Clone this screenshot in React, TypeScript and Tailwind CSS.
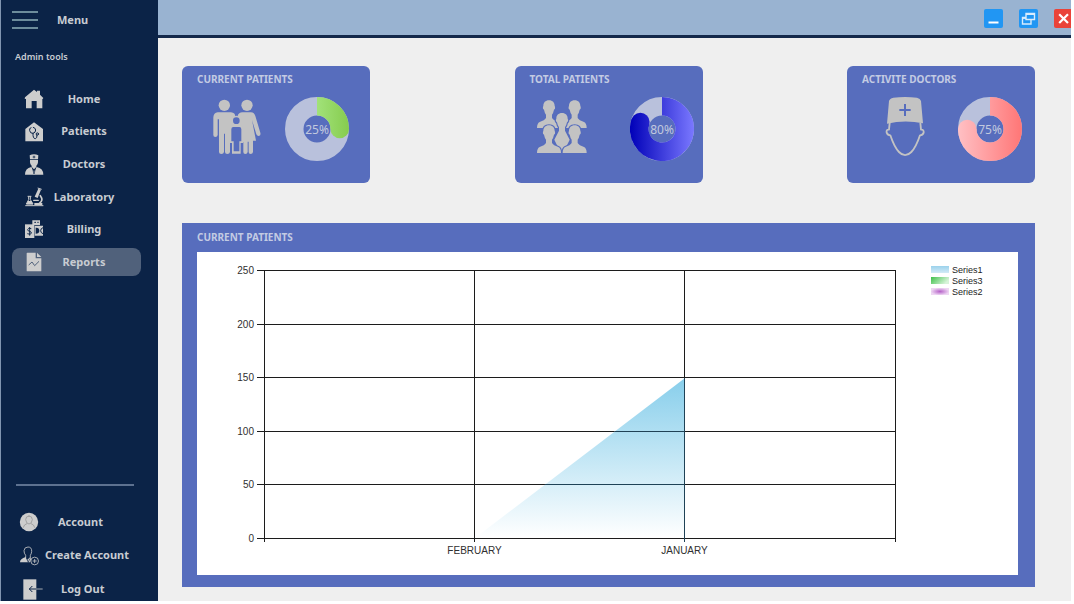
import type { ReactNode } from "react";

const ICON = "#cdcdcd";
const NAVY = "#0b2347";
const CARD = "#576dbd";

function Home() {
  return (
    <svg viewBox="72 267 60 60" className="h-5 w-5" fill={ICON} aria-hidden="true">
      <path d="M102 269 L111 276 V272 H120 V284 L130 294 L128 297 H127 V325 H110 V303 H95 V325 H78 V297 L74 296 L75 292 Z" />
    </svg>
  );
}

function Patients() {
  return (
    <svg viewBox="72 363 60 60" className="h-5 w-5" aria-hidden="true">
      <path d="M102 364 L129 384 V421 H76 V384 Z" fill={ICON} />
      <g fill="none" stroke={NAVY} strokeWidth="3" strokeLinecap="round">
        <path d="M93 380 Q87 381 89 389 Q91 398 99 397 Q107 395 107 387 Q106 380 100 379" />
        <path d="M99 397 Q98 413 106 413 Q112 412 111 402" />
        <circle cx="112" cy="399" r="3.5" />
      </g>
    </svg>
  );
}

function Doctors() {
  return (
    <svg viewBox="72 26 60 63" className="h-[21px] w-5" aria-hidden="true">
      <path d="M89 30 Q102 24 115 30 L114 42 H90 Z" fill={ICON} />
      <path d="M102 31 V39 M98 35 H106" stroke={NAVY} strokeWidth="2.4" />
      <path d="M90 44 H114 Q115 57 109 61 V66 L102 72 L95 66 V61 Q89 57 90 44 Z" fill={ICON} />
      <path d="M94 65 L102 79 L110 65 Q130 69 130 88 H75 Q75 69 94 65 Z" fill={ICON} />
      <path d="M97 67 L102 86 L107 67" stroke={NAVY} strokeWidth="2" fill="none" />
    </svg>
  );
}

function Laboratory() {
  return (
    <svg viewBox="72 124 60 60" className="h-5 w-5" aria-hidden="true">
      <g fill="none" stroke={ICON} strokeWidth="3" strokeLinecap="round" strokeLinejoin="round">
        <path d="M84 152 H93 M86 153 V162 L79 175 H99 L91 162 V153" />
        <path d="M77 180 H129" />
        <path d="M121 150 Q132 164 118 173" strokeWidth="5" />
        <path d="M101 164 H115" strokeWidth="4" />
      </g>
      <path d="M84 166 H94 L99 176 H79 Z" fill={ICON} />
      <path d="M115 129 L123 132 L113 157 L104 153 Z" fill={ICON} />
      <path d="M113 127 L125 131" stroke={ICON} strokeWidth="3" />
      <path d="M103 172 H127 V178 H103 Z" fill={ICON} />
    </svg>
  );
}

function Billing() {
  return (
    <svg viewBox="72 223 60 60" className="h-5 w-5" aria-hidden="true">
      <path d="M97 227 H120 V241 H97 Z M104 243 H129 V273 H104 Z" fill={ICON} />
      <path d="M103 233 H108 M112 233 H116" stroke={NAVY} strokeWidth="3" />
      <path d="M107 249 Q118 248 118 258 Q118 267 107 267 Z" fill={NAVY} />
      <path d="M129 249 Q122 251 122 258 Q122 265 129 267" stroke={NAVY} strokeWidth="3" fill="none" />
      <rect x="75" y="239" width="28" height="41" fill={ICON} />
      <path
        d="M94 252 Q84 248 83 255 Q83 259 89 260 Q95 261 94 266 Q92 271 82 267 M89 247 V273"
        fill="none"
        stroke={NAVY}
        strokeWidth="2.8"
      />
    </svg>
  );
}

function Reports() {
  return (
    <svg viewBox="72 319 60 60" className="h-5 w-5" aria-hidden="true">
      <path d="M82 321 H107 V338 H124 V375 Q124 377 122 377 H82 Q80 377 80 375 V323 Q80 321 82 321 Z" fill={ICON} />
      <path d="M111 321 L124 334 H111 Z" fill={ICON} />
      <path d="M86 358 L96 349 L104 360 L117 347" fill="none" stroke="#50617b" strokeWidth="3" />
    </svg>
  );
}

function Account() {
  return (
    <svg viewBox="58 126 60 60" className="h-5 w-5" aria-hidden="true">
      <circle cx="88" cy="156" r="27.5" fill={ICON} />
      <g fill="none" stroke="#9a9a9a" strokeWidth="2.6" strokeLinecap="round">
        <path d="M88 138 Q98 138 98 149 Q96 162 88 162 Q80 162 78 149 Q78 138 88 138 Z" />
        <path d="M71 172 Q73 163 81 161 M95 161 Q103 163 105 172" />
      </g>
    </svg>
  );
}

function CreateAccount() {
  return (
    <svg viewBox="58 226 60 60" className="h-5 w-5" aria-hidden="true">
      <g fill="none" stroke={ICON} strokeWidth="2.4">
        <path d="M85 229 Q97 229 96 243 Q95 250 92 254 V261 M78 261 V254 Q73 248 73 240 Q74 229 85 229" />
        <circle cx="105" cy="271" r="11.5" />
        <path d="M105 265 V277 M99 271 H111" />
      </g>
      <path d="M78 259 L83 267 L92 259 L94 266 L91 275 H61 Q61 264 78 259 Z" fill={ICON} />
      <path d="M80 262 L86 275 L90 264" fill="none" stroke={NAVY} strokeWidth="2" />
    </svg>
  );
}

function LogOut() {
  return (
    <svg viewBox="70 325 60 63" className="h-[21px] w-5" aria-hidden="true">
      <rect x="71" y="326" width="39" height="61" fill={ICON} />
      <path d="M98 346 L89 355 L98 364 M89 355 H110" fill="none" stroke={NAVY} strokeWidth="3" />
      <path d="M110 355 H129" stroke={ICON} strokeWidth="2.4" />
    </svg>
  );
}

function Family() {
  return (
    <svg viewBox="114 126 144 192" className="h-16 w-12" fill="#c3c3c3" aria-hidden="true">
      <circle cx="148" cy="151" r="17" />
      <circle cx="216" cy="151" r="17" />
      <path d="M128 172 H168 Q181 173 181 186 V262 H165 V291 Q164 297 157 297 Q150 297 150 291 V236 H147 V291 Q146 297 139 297 Q132 297 132 291 V193 H128 V240 Q127 246 121 246 Q115 246 115 240 V187 Q116 173 128 172 Z" />
      <path d="M202 172 H228 Q238 173 241 183 L256 233 Q258 241 252 243 Q247 244 244 238 L231 195 L243 257 H234 V291 Q233 297 227 297 Q221 297 221 291 V260 H218 V291 Q217 297 211 297 Q205 297 205 291 V262 H188 V182 Q191 173 202 172 Z" />
      <path d="M184 182 Q199 183 197 199 Q197 205 193 209 Q204 211 204 222 V264 H197 V296 H171 V264 H164 V222 Q164 211 175 209 Q170 204 170 197 Q172 183 184 182 Z" />
      <circle cx="184" cy="197" r="10" fill={CARD} />
      <path d="M175 216 H193 Q199 216 199 223 V259 H193 V289 H176 V259 H169 V223 Q169 216 175 216 Z" fill={CARD} />
    </svg>
  );
}

const person =
  "M0 0 C11 0 17 7 17 17 Q19 19 18 25 L15 28 Q13 38 9 43 V53 Q13 60 28 65 Q36 69 36 83 H-36 Q-36 69 -28 65 Q-13 60 -9 53 V43 Q-13 38 -15 28 L-18 25 Q-19 19 -17 17 C-17 7 -11 0 0 0 Z";

function Group() {
  return (
    <svg viewBox="95 126 150 192" className="h-16 w-[50px]" fill="#c3c3c3" aria-hidden="true">
      <path d={person} transform="translate(131 136)" />
      <path d={person} transform="translate(208 136)" />
      <g stroke={CARD} strokeWidth="7" paintOrder="stroke">
        <path
          transform="translate(170 174)"
          d="M0 0 C11 0 17 7 17 17 Q19 19 18 25 L15 28 Q13 38 9 43 V53 L23 80 L4 119 H-4 L-23 80 L-9 53 V43 Q-13 38 -15 28 L-18 25 Q-19 19 -17 17 C-17 7 -11 0 0 0 Z"
        />
        <path d={person} transform="translate(131 211)" />
        <path d={person} transform="translate(208 211)" />
      </g>
      <path d="M90 294 H250 V310 H90 Z" fill={CARD} />
    </svg>
  );
}

function Surgeon() {
  return (
    <svg viewBox="135 126 120 192" className="h-16 w-10" aria-hidden="true">
      <path d="M147 138 Q149 130 160 128 Q195 124 231 128 Q241 130 243 138 L249 205 Q195 194 141 206 Z" fill="#c3c3c3" />
      <path d="M195 147 V183 M178 165 H212" stroke={CARD} strokeWidth="6" />
      <path
        d="M149 204 L147 224 Q138 223 140 233 Q143 241 151 241 Q163 277 177 291 Q195 310 214 291 Q228 277 240 241 Q248 241 251 233 Q252 223 243 224 L241 203"
        fill="none"
        stroke="#c3c3c3"
        strokeWidth="5.5"
        strokeLinejoin="round"
      />
    </svg>
  );
}

type Gauge = { id: string; value: number; from: string; to: string };

function Donut({ id, value, from, to }: Gauge) {
  const r = 22.75;
  const angle = (value / 100) * 2 * Math.PI;
  const x = 32 + r * Math.sin(angle);
  const y = 32 - r * Math.cos(angle);
  const large = value > 50 ? 1 : 0;
  return (
    <svg viewBox="0 0 64 64" className="h-16 w-16" role="img" aria-label={`${value}%`}>
      <defs>
        <linearGradient id={id} gradientUnits="userSpaceOnUse" x1={value < 50 ? 30 : 0} y1="0" x2="64" y2="0">
          <stop offset="0" stopColor={from} />
          <stop offset="1" stopColor={to} />
        </linearGradient>
      </defs>
      <circle cx="32" cy="32" r={r} fill="none" stroke="#b9c1dc" strokeWidth="18.5" />
      <path d={`M32 ${32 - r} A${r} ${r} 0 ${large} 1 ${x} ${y}`} fill="none" stroke={`url(#${id})`} strokeWidth="18.5" />
      <circle cx={x} cy={y} r="9.25" fill={`url(#${id})`} />
      <text x="32" y="37" textAnchor="middle" fontSize="12" fill="#c2c9de" className="font-['Noto_Sans',sans-serif]">
        {value}%
      </text>
    </svg>
  );
}

function StatCard({ title, spacing, icon, gauge }: { title: string; spacing: string; icon: ReactNode; gauge: Gauge }) {
  return (
    <section className="h-[117px] w-[188px] rounded-md bg-[#576dbd] pt-[5px]">
      <h2 className="pl-[15px] text-[10px] leading-4 font-bold text-[#c3cbe3]">{title}</h2>
      <div className={`mt-2.5 flex ${spacing}`}>
        {icon}
        <Donut {...gauge} />
      </div>
    </section>
  );
}

const yTicks = [
  [250, 18.5],
  [200, 72.5],
  [150, 125.5],
  [100, 179.5],
  [50, 232.5],
  [0, 286.5],
];

const xTicks: [number, string][] = [
  [67.5, ""],
  [277.5, "FEBRUARY"],
  [487.5, "JANUARY"],
  [698.5, ""],
];

const legend = [
  ["Series1", "url(#legend-blue)"],
  ["Series3", "url(#legend-green)"],
  ["Series2", "url(#legend-purple)"],
];

function Chart() {
  return (
    <svg
      viewBox="0 0 821 323"
      className="h-auto w-full bg-white font-['Liberation_Sans',Arial,sans-serif]"
      role="img"
      aria-label="Current patients by month"
    >
      <defs>
        <linearGradient id="area" x1="0" y1="0" x2="0" y2="1">
          <stop offset="0" stopColor="#87ceeb" />
          <stop offset="1" stopColor="#ffffff" />
        </linearGradient>
        <linearGradient id="legend-blue" x1="0" y1="0" x2="0" y2="1">
          <stop offset="0" stopColor="#9bd2ec" />
          <stop offset="1" stopColor="#d3eaf6" />
        </linearGradient>
        <linearGradient id="legend-green" x1="0" y1="0" x2="1" y2="0.4">
          <stop offset="0" stopColor="#3fc04a" />
          <stop offset="1" stopColor="#d8f4da" />
        </linearGradient>
        <radialGradient id="legend-purple">
          <stop offset="0" stopColor="#b560c8" />
          <stop offset="1" stopColor="#eed6f3" />
        </radialGradient>
      </defs>
      <g stroke="#1c1c1c" strokeWidth="1">
        {yTicks.map(([value, y]) => (
          <line key={value} x1="60" x2="698" y1={y} y2={y} />
        ))}
        {xTicks.map(([x]) => (
          <line key={x} x1={x} x2={x} y1="18" y2="290" />
        ))}
      </g>
      <path d="M278 286 L488 126 V286 Z" fill="url(#area)" />
      <path d="M418 179.5 H488 M348 232.5 H488 M487.5 126 V290" stroke="#1f4256" />
      <g fontSize="10" fill="#303030">
        {yTicks.map(([value, y]) => (
          <text key={value} x="57" y={y + 3.5} textAnchor="end">
            {value}
          </text>
        ))}
        {xTicks.map(([x, label]) => (
          <text key={x} x={x} y="302" textAnchor="middle">
            {label}
          </text>
        ))}
      </g>
      <g fontSize="9" fill="#1c1c1c">
        {legend.map(([name, fill], i) => (
          <g key={name}>
            <rect x="734" y={14 + i * 11} width="18" height="7" fill={fill} />
            <text x="755" y={21 + i * 11}>
              {name}
            </text>
          </g>
        ))}
      </g>
    </svg>
  );
}

const nav: { label: string; icon: ReactNode; active?: boolean }[] = [
  { label: "Home", icon: <Home /> },
  { label: "Patients", icon: <Patients /> },
  { label: "Doctors", icon: <Doctors /> },
  { label: "Laboratory", icon: <Laboratory /> },
  { label: "Billing", icon: <Billing /> },
  { label: "Reports", icon: <Reports />, active: true },
];

const accountLinks = [
  { label: "Account", icon: <Account />, spacing: "pl-[18px] gap-[19px]" },
  { label: "Create Account", icon: <CreateAccount />, spacing: "pl-[18px] gap-1.5" },
  { label: "Log Out", icon: <LogOut />, spacing: "pl-[22px] gap-[18px]" },
];

function Sidebar() {
  return (
    <aside className="flex w-[158px] shrink-0 flex-col border-l border-[#8195b0] bg-[#0b2347] text-[11px] font-bold text-[#c8ccd2]">
      <div className="flex h-10 items-center gap-[19px] pl-[11px]">
        <button type="button" aria-label="Toggle menu" className="flex w-[26px] flex-col gap-1.5">
          <span className="h-0.5 bg-[#6d8c9c]" />
          <span className="h-0.5 bg-[#6d8c9c]" />
          <span className="h-0.5 bg-[#6d8c9c]" />
        </button>
        <span>Menu</span>
      </div>
      <p className="mt-[9px] pl-[14px] text-[9px] leading-4 font-semibold">Admin tools</p>
      <nav className="mt-5 flex h-[191px] flex-col justify-between pr-[17px] pl-[11px]">
        {nav.map((item) => (
          <button
            key={item.label}
            type="button"
            className={`flex h-7 w-full items-center rounded-lg pl-3 ${item.active ? "bg-[#50617b]" : ""}`}
          >
            {item.icon}
            <span className="w-20 text-center">{item.label}</span>
          </button>
        ))}
      </nav>
      <hr className="mt-auto mr-6 mb-6 ml-[15px] border-t-2 border-[#5d7190]" />
      <div className="flex h-[91px] flex-col justify-between">
        {accountLinks.map((item) => (
          <button key={item.label} type="button" className={`flex h-6 items-center ${item.spacing}`}>
            {item.icon}
            <span className="whitespace-nowrap">{item.label}</span>
          </button>
        ))}
      </div>
    </aside>
  );
}

function TitleBar() {
  return (
    <header className="flex h-[38px] items-center justify-end gap-4 overflow-hidden border-b-[3px] border-[#14294b] bg-[#99b3d1]">
      <button type="button" aria-label="Minimize" className="mt-0.5 h-[19px] w-[19px] rounded-xs bg-[#2196f3]">
        <svg viewBox="0 0 19 19" aria-hidden="true">
          <path d="M4.5 13.5 H14.5" stroke="#fff" strokeWidth="2" />
        </svg>
      </button>
      <button type="button" aria-label="Restore" className="mt-0.5 h-[19px] w-[19px] rounded-xs bg-[#2196f3]">
        <svg viewBox="0 0 19 19" fill="none" stroke="#d8ecfd" strokeWidth="1.4" aria-hidden="true">
          <path d="M7 4.5 H15.5 V10.5 H7 Z M7 5.2 H15.5" />
          <path d="M7 8.5 H3.5 V15 H12 V11" />
          <path d="M3.5 9.2 H7" />
        </svg>
      </button>
      <button type="button" aria-label="Close" className="mt-0.5 -mr-0.5 h-[19px] w-[19px] rounded-xs bg-[#ea4339]">
        <svg viewBox="0 0 19 19" aria-hidden="true">
          <path d="M5.2 5.2 L14 14 M14 5.2 L5.2 14" stroke="#fff" strokeWidth="2.2" />
        </svg>
      </button>
    </header>
  );
}

export default function App() {
  return (
    <div className="flex min-h-screen bg-white pr-[3px] pb-[3px] font-['Noto_Sans',sans-serif]">
      <Sidebar />
      <div className="flex min-w-0 flex-1 flex-col bg-[#efefef]">
        <TitleBar />
        <main className="pt-7 pr-9 pl-6">
          <div className="flex justify-between">
            <StatCard
              title="CURRENT PATIENTS"
              spacing="pl-[31px] gap-6"
              icon={<Family />}
              gauge={{ id: "current", value: 25, from: "#a3e37c", to: "#86cc4e" }}
            />
            <StatCard
              title="TOTAL PATIENTS"
              spacing="pl-[22px] gap-[43px]"
              icon={<Group />}
              gauge={{ id: "total", value: 80, from: "#0000b8", to: "#7a78ff" }}
            />
            <StatCard
              title="ACTIVITE DOCTORS"
              spacing="pl-[38px] gap-[33px]"
              icon={<Surgeon />}
              gauge={{ id: "doctors", value: 75, from: "#ffc0c4", to: "#ff7676" }}
            />
          </div>
          <section className="mt-10 bg-[#576dbd] pt-1.5 pr-[17px] pb-3 pl-[15px]">
            <h2 className="mb-[7px] text-[10px] leading-4 font-bold text-[#c3cbe3]">CURRENT PATIENTS</h2>
            <Chart />
          </section>
        </main>
      </div>
    </div>
  );
}
